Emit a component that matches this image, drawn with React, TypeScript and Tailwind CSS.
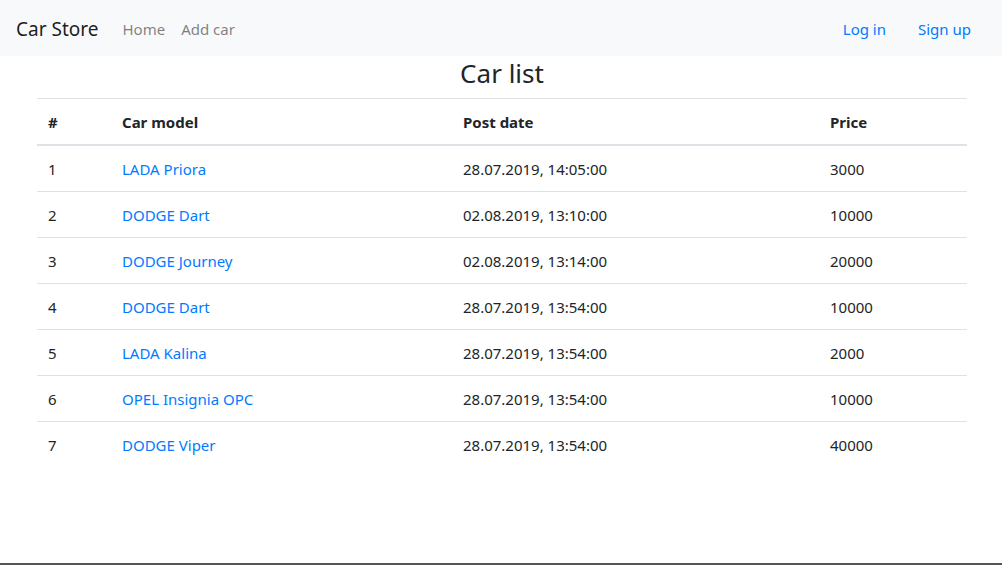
const cars = [
  { id: 1, model: 'LADA Priora', date: '28.07.2019, 14:05:00', price: 3000 },
  { id: 2, model: 'DODGE Dart', date: '02.08.2019, 13:10:00', price: 10000 },
  { id: 3, model: 'DODGE Journey', date: '02.08.2019, 13:14:00', price: 20000 },
  { id: 4, model: 'DODGE Dart', date: '28.07.2019, 13:54:00', price: 10000 },
  { id: 5, model: 'LADA Kalina', date: '28.07.2019, 13:54:00', price: 2000 },
  { id: 6, model: 'OPEL Insignia OPC', date: '28.07.2019, 13:54:00', price: 10000 },
  { id: 7, model: 'DODGE Viper', date: '28.07.2019, 13:54:00', price: 40000 },
];

const App = () => {
  return (
    <div className="h-[565px] flex flex-col border-b-2 border-[#555] bg-white text-[#212529] font-['Segoe_UI','Noto_Sans',sans-serif]">
      <nav className="h-14 flex items-center justify-between bg-[#f8f9fa] pl-4 pr-[23px] pt-[3px]">
        <div className="flex items-center">
          <a href="#" className="text-[19px] text-black/90 mr-4">
            Car Store
          </a>
          <a href="#" className="px-2 text-[15px] text-black/50">
            Home
          </a>
          <a href="#" className="px-2 text-[15px] text-black/50">
            Add car
          </a>
        </div>
        <div className="flex items-center gap-4">
          <a href="#" className="px-2 text-[15px] text-[#007bff]">
            Log in
          </a>
          <a href="#" className="px-2 text-[15px] text-[#007bff]">
            Sign up
          </a>
        </div>
      </nav>

      <div className="w-[930px] ml-[37px]">
        <h3 className="text-[26px] leading-[34px] text-center mb-2">Car list</h3>
        <table className="w-full text-[15px] text-left border-collapse">
          <thead>
            <tr className="border-t border-[#dee2e6] border-b-2">
              <th className="w-[74px] pl-[11px] pr-3 pt-3 pb-[10px] leading-[23px] font-bold">#</th>
              <th className="w-[341px] pl-[11px] pr-3 pt-3 pb-[10px] leading-[23px] font-bold">Car model</th>
              <th className="w-[367px] pl-[11px] pr-3 pt-3 pb-[10px] leading-[23px] font-bold">Post date</th>
              <th className="pl-[11px] pr-3 pt-3 pb-[10px] leading-[23px] font-bold">Price</th>
            </tr>
          </thead>
          <tbody>
            {cars.map((car, i) => (
              <tr key={car.id} className={i > 0 ? 'border-t border-[#dee2e6]' : ''}>
                <td className="pl-[11px] pr-3 pt-3 pb-[10px] leading-[23px]">{car.id}</td>
                <td className="pl-[11px] pr-3 pt-3 pb-[10px] leading-[23px]">
                  <a href="#" className="text-[#007bff]">
                    {car.model}
                  </a>
                </td>
                <td className="pl-[11px] pr-3 pt-3 pb-[10px] leading-[23px]">{car.date}</td>
                <td className="pl-[11px] pr-3 pt-3 pb-[10px] leading-[23px]">{car.price}</td>
              </tr>
            ))}
          </tbody>
        </table>
      </div>
    </div>
  );
};

export default App;
